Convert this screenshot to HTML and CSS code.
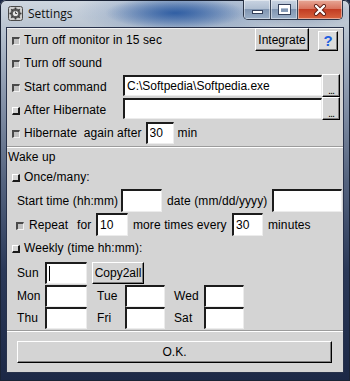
FILE: index.html
```html
<!DOCTYPE html>
<html lang="en">
<head>
    <meta charset="UTF-8">
    <meta name="viewport" content="width=device-width, initial-scale=1.0">
    <title>Settings</title>
    <link rel="stylesheet" href="styles.css">
</head>
<body>
    <div class="window">
        <div class="titlebar">
            <svg class="app-icon" width="15" height="15" viewBox="0 0 15 15">
                <rect x="0.5" y="0.5" width="14" height="14" rx="2" fill="#cfcfcf" stroke="#4a4a4a"/>
                <circle cx="7.5" cy="7.5" r="5" fill="#5a5a5a"/>
                <path d="M7.5 1.5v2M7.5 11.5v2M1.5 7.5h2M11.5 7.5h2M3.3 3.3l1.4 1.4M10.3 10.3l1.4 1.4M3.3 11.7l1.4-1.4M10.3 4.7l1.4-1.4" stroke="#3a3a3a" stroke-width="1.6"/>
                <circle cx="7.5" cy="7.5" r="2.6" fill="#e6e6e6"/>
                <path d="M7.5 7.5V5.6M7.5 7.5h1.6" stroke="#333" stroke-width="0.9"/>
            </svg>
            <span class="title">Settings</span>
            <div class="caption">
                <span class="cap cap-min"><i></i></span>
                <span class="cap cap-max"><i></i></span>
                <span class="cap cap-close">
                    <svg width="14" height="12" viewBox="0 0 14 12">
                        <path d="M3 2l8 8M11 2l-8 8" stroke="#5a1a10" stroke-width="4" stroke-linecap="round"/>
                        <path d="M3 2l8 8M11 2l-8 8" stroke="#fff" stroke-width="2.4" stroke-linecap="round"/>
                    </svg>
                </span>
            </div>
        </div>

        <div class="client">
            <div class="row">
                <label class="check"><span class="box"></span>Turn off monitor in 15 sec</label>
                <button class="btn btn-integrate">Integrate</button>
                <button class="btn btn-help">?</button>
            </div>
            <div class="row">
                <label class="check"><span class="box"></span>Turn off sound</label>
            </div>
            <div class="row row-cmd">
                <label class="check check-cmd"><span class="box"></span>Start command</label>
                <input class="field field-cmd" type="text" value="C:\Softpedia\Softpedia.exe">
                <button class="btn btn-dots">...</button>
            </div>
            <div class="row row-cmd">
                <label class="check check-cmd"><span class="box box-raised"></span>After Hibernate</label>
                <input class="field field-cmd" type="text" value="">
                <button class="btn btn-dots">...</button>
            </div>
            <div class="row row-tall">
                <label class="check"><span class="box"></span>Hibernate&nbsp; again after</label>
                <input class="field field-min" type="text" value="30">
                <span class="unit">min</span>
            </div>

            <div class="separator"></div>

            <div class="section-title">Wake up</div>
            <div class="row row-once">
                <label class="check"><span class="box box-raised"></span>Once/many:</label>
            </div>
            <div class="row row-tall row-indent">
                <span class="lbl-start">Start time (hh:mm)</span>
                <input class="field field-time" type="text" value="">
                <span class="lbl-date">date (mm/dd/yyyy)</span>
                <input class="field field-date" type="text" value="">
            </div>
            <div class="row row-repeat">
                <label class="check"><span class="box box-repeat"></span><span class="lbl-repeat">Repeat</span></label>
                <span class="lbl-for">for</span>
                <input class="field field-count" type="text" value="10">
                <span class="lbl-every">more times every</span>
                <input class="field field-count field-every" type="text" value="30">
                <span class="unit unit-minutes">minutes</span>
            </div>
            <div class="row row-weekly">
                <label class="check"><span class="box box-raised"></span>Weekly (time hh:mm):</label>
            </div>

            <div class="row row-day row-sun">
                <span class="day-label">Sun</span>
                <input class="field field-day field-first field-caret" type="text" value="">
                <button class="btn btn-copy">Copy2all</button>
            </div>
            <div class="row row-day">
                <span class="day-label">Mon</span>
                <input class="field field-day field-first" type="text" value="">
                <span class="day-label day-mid">Tue</span>
                <input class="field field-day" type="text" value="">
                <span class="day-label day-last">Wed</span>
                <input class="field field-day" type="text" value="">
            </div>
            <div class="row row-day">
                <span class="day-label">Thu</span>
                <input class="field field-day field-first" type="text" value="">
                <span class="day-label day-mid">Fri</span>
                <input class="field field-day" type="text" value="">
                <span class="day-label day-last">Sat</span>
                <input class="field field-day" type="text" value="">
            </div>

            <div class="separator"></div>

            <div class="ok-bar">
                <button class="btn btn-ok">O.K.</button>
            </div>
        </div>
    </div>
</body>
</html>
```

FILE: styles.css
```css
body {
    margin: 0;
    background: #1b2744;
    font-family: 'Liberation Sans', Arial, sans-serif;
    font-size: 12px;
    letter-spacing: 0.1px;
    color: #000;
}
.window {
    width: 350px;
    height: 381px;
    display: flex;
    flex-direction: column;
    overflow: hidden;
    border-radius: 6px 6px 0 0;
    background:
        radial-gradient(ellipse 70px 16px at 175px 13px, rgba(40, 88, 160, 0.9), rgba(40, 88, 160, 0) 100%),
        radial-gradient(ellipse 110px 26px at 185px 12px, rgba(70, 110, 170, 0.55), rgba(70, 110, 170, 0) 100%),
        radial-gradient(ellipse 60px 16px at 300px 12px, rgba(110, 130, 165, 0.6), rgba(110, 130, 165, 0) 100%),
        linear-gradient(to bottom, #cfd7e0 0, #b9c4d1 28px, #8c99ae 90px, #55647f 180px, #2b3958 270px, #1c2846 381px);
    box-shadow: inset 0 0 0 1px #1a2335;
}

/* title bar */
.titlebar {
    display: flex;
    align-items: flex-start;
    height: 28px;
    padding-left: 8px;
    flex: none;
}
.app-icon {
    margin-top: 6px;
}
.title {
    margin-left: 5px;
    line-height: 28px;
    font-family: 'Open Sans', 'Noto Sans', sans-serif;
    font-size: 12px;
    letter-spacing: 0;
    color: #111;
}
.caption {
    display: flex;
    margin-left: auto;
    margin-right: 7px;
    height: 19px;
    border: 1px solid #2c3547;
    border-top: none;
    border-radius: 0 0 5px 5px;
    overflow: hidden;
}
.cap {
    display: flex;
    align-items: center;
    justify-content: center;
    height: 19px;
    box-shadow: inset 0 0 0 1px rgba(255, 255, 255, 0.45);
}
.cap-min, .cap-max {
    width: 26px;
    background: linear-gradient(to bottom, #c9d4e2 0%, #b0bfd2 45%, #8196b2 50%, #9cb0c8 100%);
    border-right: 1px solid #3b4659;
}
.cap-min i {
    display: block;
    width: 9px;
    height: 2px;
    margin-top: 5px;
    background: #fff;
    border: 1px solid #34405a;
}
.cap-max i {
    display: block;
    width: 7px;
    height: 4px;
    background: transparent;
    border: 2px solid #fff;
    border-top-width: 3px;
    outline: 1px solid #34405a;
}
.cap-close {
    width: 44px;
    background: linear-gradient(to bottom, #e7a897 0%, #d9755f 45%, #c23d23 50%, #d8643f 100%);
}

/* client area */
.client {
    flex: none;
    height: 344px;
    margin: 0 7px 9px;
    background: #d4d4d4;
    box-shadow: 0 0 0 1px #27314a, inset 0 1px 0 #f2f2f2;
}
.row {
    display: flex;
    align-items: center;
    height: 23px;
    padding-left: 5px;
    white-space: nowrap;
}
.row-tall {
    height: 25px;
}
.row-indent {
    padding-left: 10px;
}
.row-once {
    height: 22px;
}
.row-weekly {
    height: 24px;
}
.row-repeat {
    padding-left: 9px;
}
.row-day {
    height: 22px;
    padding-left: 10px;
}
.row-sun {
    height: 25px;
}

.check {
    display: flex;
    align-items: center;
}
.check-cmd {
    width: 111px;
    padding-top: 2px;
}
.box {
    width: 5px;
    height: 5px;
    margin: 2px 4px 0 0;
    background: #c2c2c2;
    border-style: solid;
    border-width: 2px 1px 1px 2px;
    border-color: #4a4a4a #f2f2f2 #f2f2f2 #4a4a4a;
}
.box-raised {
    background: #d4d4d4;
    border-width: 1px 2px 2px 1px;
    border-color: #fff #1a1a1a #1a1a1a #fff;
}
.box-repeat {
    margin-right: 5px;
}

/* inputs and buttons */
.field {
    box-sizing: border-box;
    height: 21px;
    padding: 0 2px;
    font: 12px 'Liberation Sans', Arial, sans-serif;
    color: #000;
    background: #fff;
    border-style: solid;
    border-width: 2px 1px 1px 2px;
    border-color: #1c1c1c #ececec #ececec #1c1c1c;
    outline: none;
}
.field-cmd {
    flex: 1;
    min-width: 0;
}
.field-min {
    width: 28px;
    height: 22px;
    margin-left: 4px;
}
.field-time {
    width: 41px;
    height: 23px;
}
.field-date {
    width: 70px;
    height: 23px;
}
.field-count {
    width: 32px;
    height: 23px;
}
.field-every {
    width: 31px;
}
.field-day {
    width: 40px;
    height: 22px;
}
.field-first {
    width: 42px;
}
.field-caret {
    background: #fff linear-gradient(#000, #000) no-repeat 2px 2px / 1px 15px;
}

.btn {
    box-sizing: border-box;
    padding: 0;
    font: 12px 'Liberation Sans', Arial, sans-serif;
    color: #000;
    background: #d4d4d4;
    border: 1px solid;
    border-color: #fff #000 #000 #fff;
    box-shadow: inset -1px -1px 0 #808080;
}
.btn-integrate {
    width: 54px;
    height: 23px;
    margin-left: auto;
    align-self: flex-start;
}
.btn-help {
    width: 20px;
    height: 20px;
    margin: 0 5px 0 9px;
    align-self: flex-end;
    font-weight: bold;
    font-size: 15px;
    line-height: 16px;
    color: #1f5fe0;
    background: #dcdcdc;
}
.row-cmd {
    padding-right: 3px;
}
.btn-dots {
    width: 18px;
    height: 23px;
    padding-top: 8px;
    font-size: 11px;
    line-height: 12px;
    letter-spacing: -1px;
}
.btn-copy {
    width: 52px;
    height: 22px;
    margin-left: 5px;
}

.unit {
    margin-left: 4px;
}
.unit-minutes {
    margin-left: 5px;
}
.lbl-start {
    width: 104px;
}
.lbl-date {
    width: 105px;
    margin-left: 5px;
}
.lbl-repeat {
    width: 48px;
}
.lbl-for {
    width: 19px;
}
.lbl-every {
    width: 99px;
    padding-left: 5px;
}
.day-label {
    width: 28px;
}
.day-mid {
    margin-left: 10px;
}
.day-last {
    width: 30px;
    margin-left: 9px;
}

.separator {
    height: 0;
    margin-top: 1px;
    border-top: 1px solid #9c9c9c;
    border-bottom: 1px solid #fff;
}
.section-title {
    height: 18px;
    line-height: 18px;
    padding-left: 1px;
}
.ok-bar {
    padding: 9px 11px 9px 10px;
}
.btn-ok {
    display: block;
    width: 100%;
    height: 22px;
}
```
